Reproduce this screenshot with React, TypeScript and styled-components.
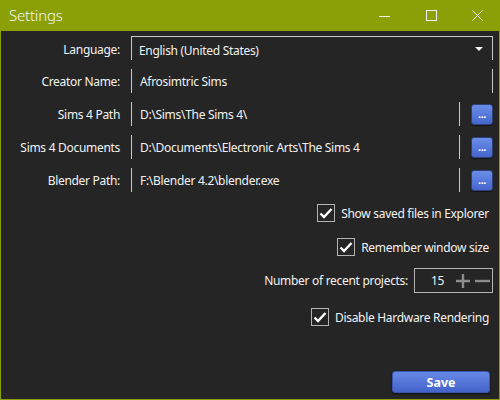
import { useState } from 'react';
import styled, { createGlobalStyle } from 'styled-components';

const GlobalStyle = createGlobalStyle`
  html, body {
    margin: 0;
    padding: 0;
    background: #252525;
  }
  * {
    box-sizing: border-box;
  }
`;

const Window = styled.div`
  width: 500px;
  height: 400px;
  display: flex;
  flex-direction: column;
  background-color: #8aa006;
  font-family: 'Noto Sans', 'Open Sans', sans-serif;
  color: #f2f2f2;
  overflow: hidden;
`;

const TitleBar = styled.header`
  height: 31px;
  display: flex;
  align-items: center;
  padding-left: 9px;
  flex-shrink: 0;
`;

const Title = styled.span`
  flex: 1;
  font-size: 15px;
  font-weight: 300;
  color: #f4f4f4;
  letter-spacing: -0.2px;
  padding-bottom: 1px;
`;

const CaptionButton = styled.div`
  width: 46px;
  height: 31px;
  display: flex;
  align-items: center;
  justify-content: center;
`;

const Body = styled.main`
  flex: 1;
  display: flex;
  flex-direction: column;
  margin: 0 1px 1px 1px;
  padding: 5px 6px 6px 0;
  background-color: #252525;
  font-size: 12px;
  letter-spacing: -0.3px;
`;

const Form = styled.div`
  display: grid;
  grid-template-columns: 130px 1fr;
  grid-auto-rows: 24px;
  row-gap: 9px;
`;

const Label = styled.label<{ $drop?: number }>`
  display: flex;
  align-items: center;
  justify-content: flex-end;
  padding-right: 11px;
  padding-top: ${(p) => p.$drop ?? 0}px;
  white-space: nowrap;
`;

const FieldRow = styled.div`
  display: flex;
  align-items: center;
  gap: 11px;
`;

const Field = styled.div<{ $top?: boolean }>`
  flex: 1;
  height: 24px;
  display: flex;
  align-items: center;
  padding: ${(p) => (p.$top ? '4px 7px 0 7px' : '0 7px 0 8px')};
  border-left: 1px solid #c9c9c9;
  border-right: 1px solid #c9c9c9;
  border-top: ${(p) => (p.$top ? '1px solid #c9c9c9' : 'none')};
  white-space: nowrap;
  overflow: hidden;
`;

const FieldText = styled.span`
  flex: 1;
`;

const Arrow = styled.span`
  width: 0;
  height: 0;
  border-left: 4px solid transparent;
  border-right: 4px solid transparent;
  border-top: 4px solid #f4f4f4;
  margin-right: 2px;
  margin-top: -3px;
`;

const BrowseButton = styled.button`
  width: 22px;
  height: 21px;
  padding: 0 0 5px 0;
  border: 1px solid #2f3f7a;
  border-radius: 3px;
  background: linear-gradient(#6a8ee8, #4565cc);
  color: #fff;
  font-family: inherit;
  font-size: 11px;
  font-weight: 700;
  line-height: 1;
  display: flex;
  align-items: flex-end;
  justify-content: center;
  letter-spacing: -0.5px;
  box-shadow: 0 1px 1px rgba(0, 0, 0, 0.5);
`;

const Options = styled.div`
  display: flex;
  flex-direction: column;
  align-items: flex-end;
`;

const OptionRow = styled.div<{ $mt: number; $mr: number }>`
  display: flex;
  align-items: center;
  gap: 6px;
  margin-top: ${(p) => p.$mt}px;
  margin-right: ${(p) => p.$mr}px;
  white-space: nowrap;
`;

const Box = styled.span`
  width: 18px;
  height: 18px;
  border: 1px solid #b4b4b4;
  display: flex;
  align-items: center;
  justify-content: center;
`;

const Spinner = styled.div`
  width: 79px;
  height: 25px;
  border: 1px solid #b4b4b4;
  display: flex;
  align-items: center;
  padding-left: 16px;
  gap: 5px;
`;

const SpinValue = styled.span`
  width: 20px;
`;

const Footer = styled.div`
  margin-top: auto;
  display: flex;
  justify-content: flex-end;
  padding-right: 3px;
`;

const SaveButton = styled.button`
  width: 98px;
  height: 22px;
  border: 1px solid #3a55b0;
  border-radius: 3px;
  background: linear-gradient(#6689e6, #4463cb);
  color: #fff;
  font-family: inherit;
  font-size: 12.5px;
  font-weight: 700;
  box-shadow: 0 1px 2px rgba(0, 0, 0, 0.6);
`;

const Check = () => (
  <svg width="14" height="12" viewBox="0 0 14 12">
    <path d="M1.5 6.5 L5 10 L12.5 2" fill="none" stroke="#fff" strokeWidth="2.4" />
  </svg>
);

const CheckBox = ({ label, mt, mr }: { label: string; mt: number; mr: number }) => (
  <OptionRow $mt={mt} $mr={mr}>
    <Box>
      <Check />
    </Box>
    <span>{label}</span>
  </OptionRow>
);

const paths = [
  { label: 'Sims 4 Path', value: 'D:\\Sims\\The Sims 4\\' },
  { label: 'Sims 4 Documents', value: 'D:\\Documents\\Electronic Arts\\The Sims 4' },
  { label: 'Blender Path:', value: 'F:\\Blender 4.2\\blender.exe' }
];

const App = () => {
  const [recent] = useState(15);

  return (
    <Window>
      <GlobalStyle />
      <TitleBar>
        <Title>Settings</Title>
        <CaptionButton>
          <svg width="12" height="12" viewBox="0 0 12 12">
            <path d="M0 6.5 H11" stroke="#f0f0f0" strokeWidth="1" />
          </svg>
        </CaptionButton>
        <CaptionButton>
          <svg width="11" height="11" viewBox="0 0 11 11">
            <rect x="0.5" y="0.5" width="10" height="10" fill="none" stroke="#f0f0f0" strokeWidth="1" />
          </svg>
        </CaptionButton>
        <CaptionButton>
          <svg width="11" height="11" viewBox="0 0 11 11">
            <path d="M0.5 0.5 L10.5 10.5 M10.5 0.5 L0.5 10.5" stroke="#f0f0f0" strokeWidth="1" />
          </svg>
        </CaptionButton>
      </TitleBar>
      <Body>
        <Form>
          <Label $drop={2}>Language:</Label>
          <Field $top>
            <FieldText>English (United States)</FieldText>
            <Arrow />
          </Field>
          <Label>Creator Name:</Label>
          <Field>
            <FieldText>Afrosimtric Sims</FieldText>
          </Field>
          {paths.map((p) => (
            <>
              <Label key={p.label}>{p.label}</Label>
              <FieldRow key={p.label + '-f'}>
                <Field>
                  <FieldText>{p.value}</FieldText>
                </Field>
                <BrowseButton>...</BrowseButton>
              </FieldRow>
            </>
          ))}
        </Form>
        <Options>
          <CheckBox label="Show saved files in Explorer" mt={12} mr={4} />
          <CheckBox label="Remember window size" mt={16} mr={4} />
          <OptionRow $mt={12} $mr={0}>
            <span>Number of recent projects:</span>
            <Spinner>
              <SpinValue>{recent}</SpinValue>
              <svg width="14" height="14" viewBox="0 0 14 14">
                <path d="M7 0 V14 M0 7 H14" stroke="#8c8c8c" strokeWidth="2.4" />
              </svg>
              <svg width="15" height="14" viewBox="0 0 15 14">
                <path d="M0 7 H15" stroke="#8c8c8c" strokeWidth="2.4" />
              </svg>
            </Spinner>
          </OptionRow>
          <CheckBox label="Disable Hardware Rendering" mt={15} mr={4} />
        </Options>
        <Footer>
          <SaveButton>Save</SaveButton>
        </Footer>
      </Body>
    </Window>
  );
};

export default App;
